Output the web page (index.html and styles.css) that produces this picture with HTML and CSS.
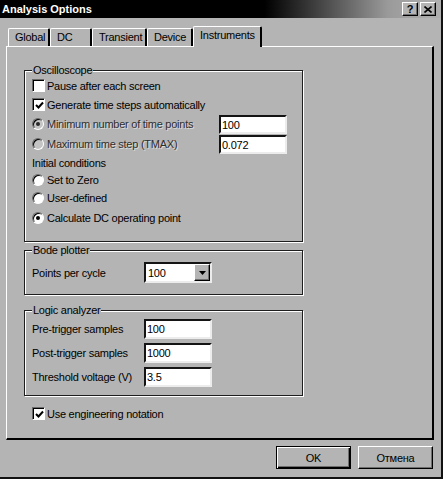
FILE: index.html
```html
<!DOCTYPE html>
<html>
<head>
<meta charset="utf-8">
<link rel="stylesheet" href="styles.css">
</head>
<body>
<div class="window">
  <div class="titlebar">
    <span class="title">Analysis Options</span>
    <div class="tbtns">
      <span class="tbtn">?</span>
      <span class="tbtn"><svg width="8" height="7" viewBox="0 0 8 7"><path d="M0.5 0.5 L7.5 6.5 M7.5 0.5 L0.5 6.5" stroke="#000" stroke-width="1.6"/></svg></span>
    </div>
  </div>
  <div class="tabs">
    <div class="tab w-global">Global</div>
    <div class="tab w-dc">DC</div>
    <div class="tab w-trans">Transient</div>
    <div class="tab w-dev">Device</div>
    <div class="tab active w-inst">Instruments</div>
  </div>
  <div class="panel">
    <div class="group osc">
      <span class="legend">Oscilloscope</span>
      <div class="row h19"><span class="cb"></span><span>Pause after each screen</span></div>
      <div class="row h19"><span class="cb"><svg width="9" height="9" viewBox="0 0 9 9"><path d="M1 4 L3.5 6.5 L8 1.5" stroke="#000" stroke-width="2" fill="none"/></svg></span><span>Generate time steps automatically</span></div>
      <div class="row h20">
        <div class="lblw"><span class="radio dis on"></span><span class="dtext">Minimum number of time points</span></div>
        <div class="field endal">100</div>
      </div>
      <div class="row h20">
        <div class="lblw"><span class="radio dis"></span><span class="dtext">Maximum time step (TMAX)</span></div>
        <div class="field endal">0.072</div>
      </div>
      <div class="row h17"><span>Initial conditions</span></div>
      <div class="row h17"><span class="radio"></span><span>Set to Zero</span></div>
      <div class="row h20"><span class="radio"></span><span>User-defined</span></div>
      <div class="row h20"><span class="radio on"></span><span>Calculate DC operating point</span></div>
    </div>
    <div class="group bode">
      <span class="legend">Bode plotter</span>
      <div class="row h21">
        <span class="lbl2">Points per cycle</span>
        <div class="field select"><span>100</span><span class="dd"><svg width="7" height="4" viewBox="0 0 7 4"><path d="M0 0 H7 L3.5 4 Z" fill="#000"/></svg></span></div>
      </div>
    </div>
    <div class="group logic">
      <span class="legend">Logic analyzer</span>
      <div class="row h24"><span class="lbl2">Pre-trigger samples</span><div class="field">100</div></div>
      <div class="row h24"><span class="lbl2">Post-trigger samples</span><div class="field">1000</div></div>
      <div class="row h24"><span class="lbl2">Threshold voltage (V)</span><div class="field">3.5</div></div>
    </div>
    <div class="row h19 eng"><span class="cb"><svg width="9" height="9" viewBox="0 0 9 9"><path d="M1 4 L3.5 6.5 L8 1.5" stroke="#000" stroke-width="2" fill="none"/></svg></span><span>Use engineering notation</span></div>
  </div>
  <div class="buttons">
    <div class="btn def">OK</div>
    <div class="btn">Отмена</div>
  </div>
</div>
</body>
</html>
```
FILE: styles.css
```css
body {
  margin: 0;
  background: #fff;
  font-family: "Liberation Sans", Arial, sans-serif;
  font-size: 11px;
  letter-spacing: -0.25px;
  color: #000;
}

.window {
  width: 443px;
  height: 479px;
  box-sizing: border-box;
  background: #b4b4b4;
  border-right: 2px solid #111;
  border-bottom: 2px solid #111;
  display: flex;
  flex-direction: column;
}

.titlebar {
  height: 18px;
  flex: none;
  display: flex;
  align-items: center;
  justify-content: space-between;
  padding: 0 5px 0 2px;
  background: linear-gradient(90deg, #000 0%, #000 60%, #9a9a9a 88%, #b0b0b0 100%);
}

.title {
  color: #fff;
  font-weight: bold;
  letter-spacing: 0;
}

.tbtns {
  display: flex;
  gap: 2px;
}

.tbtn {
  width: 16px;
  height: 14px;
  box-sizing: border-box;
  background: #b4b4b4;
  border: 1px solid;
  border-color: #fff #000 #000 #fff;
  box-shadow: inset -1px -1px #6e6e6e;
  display: flex;
  align-items: center;
  justify-content: center;
  font-weight: bold;
  font-size: 11px;
  letter-spacing: 0;
}

.tabs {
  flex: none;
  display: flex;
  align-items: flex-end;
  height: 20px;
  margin-top: 8px;
  padding-left: 8px;
}

.tab {
  height: 18px;
  box-sizing: border-box;
  border-top: 1px solid #fff;
  border-left: 1px solid #fff;
  border-right: 2px solid #000;
  border-radius: 2px 2px 0 0;
  padding-left: 6px;
  line-height: 17px;
  background: #b4b4b4;
}

.tab.active {
  height: 21px;
  margin-bottom: -1px;
  position: relative;
  z-index: 1;
}

.w-global { width: 42px; }
.w-dc { width: 42px; }
.w-trans { width: 55px; }
.w-dev { width: 46px; }
.w-inst { width: 69px; }

.panel {
  flex: none;
  margin-left: 6px;
  width: 428px;
  height: 394px;
  box-sizing: border-box;
  border-top: 1px solid #fff;
  border-left: 1px solid #fff;
  border-right: 2px solid #000;
  border-bottom: 2px solid #000;
  padding-left: 17px;
  display: flex;
  flex-direction: column;
}

.group {
  position: relative;
  width: 279px;
  box-sizing: border-box;
  border: 1px solid #1e1e1e;
  box-shadow: 1px 1px 0 #fff, inset 1px 1px 0 #fff;
  padding-left: 7px;
  display: flex;
  flex-direction: column;
}

.legend {
  position: absolute;
  left: 7px;
  top: -8px;
  line-height: 14px;
  padding: 0 1px;
  background: #b4b4b4;
}

.osc {
  margin-top: 23px;
  height: 172px;
  padding-top: 5px;
}

.bode {
  margin-top: 8px;
  height: 45px;
  padding-top: 11px;
}

.logic {
  margin-top: 15px;
  height: 86px;
  padding-top: 6px;
}

.row {
  display: flex;
  align-items: center;
  flex: none;
}

.h17 { height: 17px; }
.h19 { height: 19px; }
.h20 { height: 20px; }
.h21 { height: 21px; }
.h24 { height: 24px; }

.eng {
  margin-top: 8px;
  margin-left: 8px;
}

.lblw {
  width: 187px;
  display: flex;
  align-items: center;
  align-self: center;
}

.lbl2 {
  width: 112px;
}

.dtext {
  color: #2e2e2e;
  text-shadow: 1px 1px 0 #dcdcdc;
}

.cb {
  width: 13px;
  height: 13px;
  box-sizing: border-box;
  background: #fff;
  border: 1px solid;
  border-color: #6a6a6a #fff #fff #6a6a6a;
  box-shadow: inset 1px 1px #000;
  margin-right: 2px;
  display: flex;
  align-items: center;
  justify-content: center;
  flex: none;
}

.cb svg {
  margin: 1px 0 0 1px;
}

.radio {
  width: 12px;
  height: 12px;
  box-sizing: border-box;
  border-radius: 50%;
  background: #fff;
  border: 1px solid;
  border-color: #6a6a6a #fff #fff #6a6a6a;
  box-shadow: inset 1px 1px #000;
  margin-right: 3px;
  position: relative;
  flex: none;
}

.radio.on::after {
  content: "";
  position: absolute;
  left: 3px;
  top: 3px;
  width: 4px;
  height: 4px;
  border-radius: 50%;
  background: #000;
}

.radio.dis {
  background: #c4c4c4;
}

.radio.dis.on::after {
  background: #2a2a2a;
}

.field {
  width: 68px;
  height: 20px;
  box-sizing: border-box;
  background: #fff;
  border: 2px solid;
  border-color: #141414 #ececec #ececec #141414;
  padding-left: 1px;
  display: flex;
  align-items: center;
  flex: none;
}

.endal {
  height: 19px;
  align-self: flex-end;
}

.select {
  height: 21px;
  justify-content: space-between;
  padding-left: 2px;
}

.dd {
  width: 16px;
  height: 17px;
  box-sizing: border-box;
  background: #b4b4b4;
  border: 1px solid;
  border-color: #fff #000 #000 #fff;
  box-shadow: inset -1px -1px #6e6e6e;
  display: flex;
  align-items: center;
  justify-content: center;
}

.buttons {
  flex: none;
  display: flex;
  justify-content: flex-end;
  gap: 7px;
  margin-top: 6px;
  padding-right: 8px;
}

.btn {
  width: 75px;
  height: 23px;
  box-sizing: border-box;
  border: 1px solid;
  border-color: #fff #000 #000 #fff;
  box-shadow: inset -1px -1px #6e6e6e;
  display: flex;
  align-items: center;
  justify-content: center;
}

.btn.def {
  border-color: #000;
  box-shadow: inset 1px 1px #fff, inset -1px -1px #000, inset -2px -2px #6e6e6e;
}
```
